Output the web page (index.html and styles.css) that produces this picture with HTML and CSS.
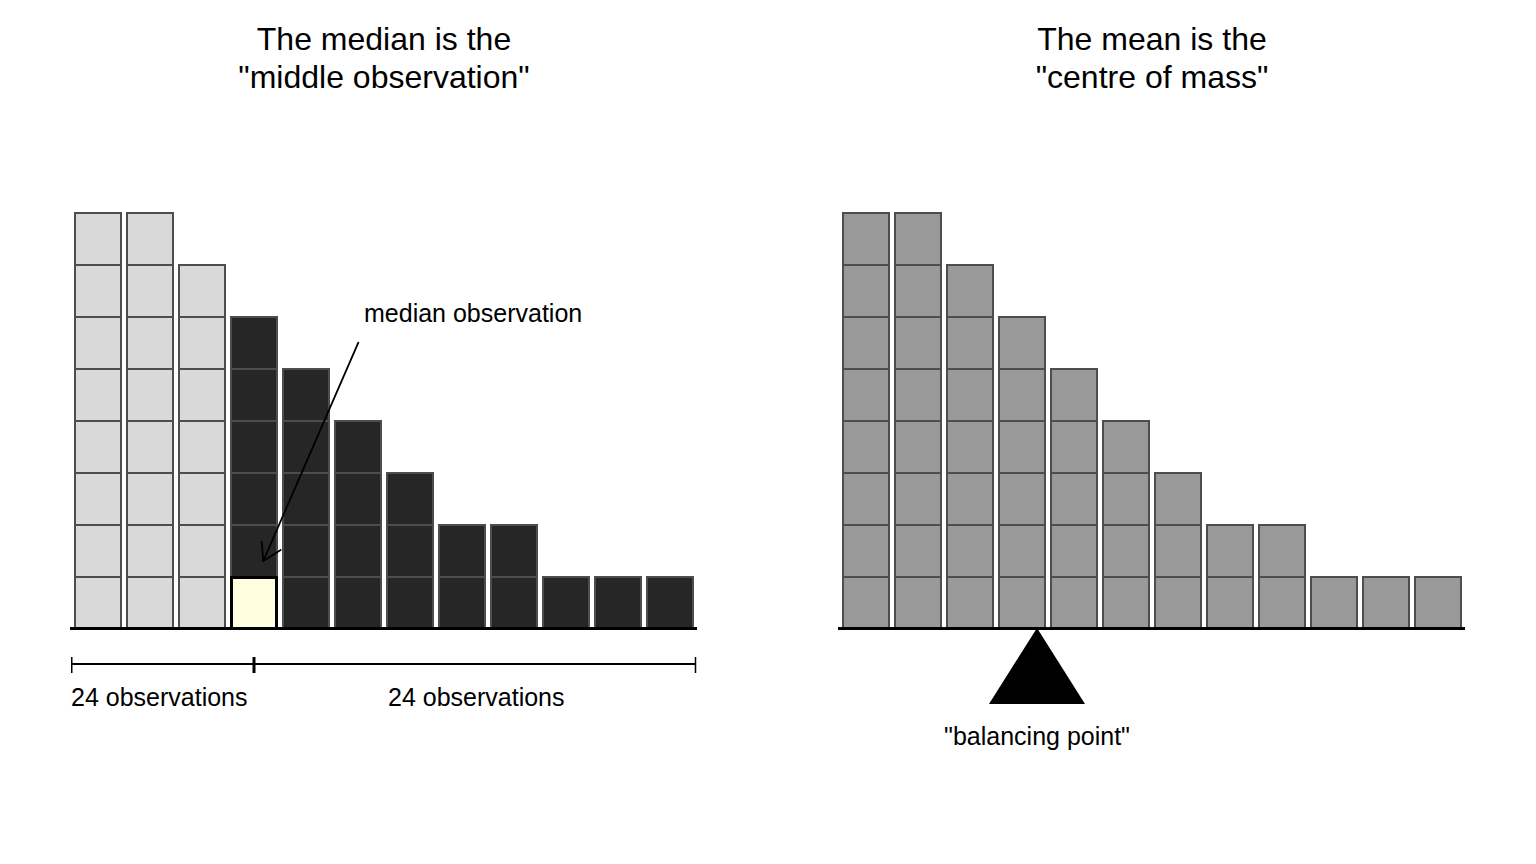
FILE: index.html
```html
<!DOCTYPE html>
<html lang="en">
<head>
<meta charset="utf-8">
<title>Median vs mean</title>
<link rel="stylesheet" href="styles.css">
</head>
<body>
<div class="figure">
  <section class="panel">
    <h2 class="title">The median is the<br>"middle observation"</h2>
    <div class="plot">
      <div class="bars">
        <div class="col"><div class="cell light"></div><div class="cell light"></div><div class="cell light"></div><div class="cell light"></div><div class="cell light"></div><div class="cell light"></div><div class="cell light"></div><div class="cell light"></div></div>
        <div class="col"><div class="cell light"></div><div class="cell light"></div><div class="cell light"></div><div class="cell light"></div><div class="cell light"></div><div class="cell light"></div><div class="cell light"></div><div class="cell light"></div></div>
        <div class="col"><div class="cell light"></div><div class="cell light"></div><div class="cell light"></div><div class="cell light"></div><div class="cell light"></div><div class="cell light"></div><div class="cell light"></div></div>
        <div class="col"><div class="cell dark"></div><div class="cell dark"></div><div class="cell dark"></div><div class="cell dark"></div><div class="cell dark"></div><div class="cell median"></div></div>
        <div class="col"><div class="cell dark"></div><div class="cell dark"></div><div class="cell dark"></div><div class="cell dark"></div><div class="cell dark"></div></div>
        <div class="col"><div class="cell dark"></div><div class="cell dark"></div><div class="cell dark"></div><div class="cell dark"></div></div>
        <div class="col"><div class="cell dark"></div><div class="cell dark"></div><div class="cell dark"></div></div>
        <div class="col"><div class="cell dark"></div><div class="cell dark"></div></div>
        <div class="col"><div class="cell dark"></div><div class="cell dark"></div></div>
        <div class="col"><div class="cell dark"></div></div>
        <div class="col"><div class="cell dark"></div></div>
        <div class="col"><div class="cell dark"></div></div>
      </div>
      <div class="axis"></div>
      <svg class="bracket" width="628" height="18" viewBox="0 0 628 18">
        <line x1="1.75" y1="8" x2="625.5" y2="8" stroke="#000" stroke-width="2"/>
        <line x1="1.75" y1="1" x2="1.75" y2="17" stroke="#000" stroke-width="1.5"/>
        <line x1="184" y1="1" x2="184" y2="17" stroke="#000" stroke-width="3"/>
        <line x1="625.5" y1="1" x2="625.5" y2="17" stroke="#000" stroke-width="1.5"/>
      </svg>
      <div class="counts">
        <span class="count count-a">24 observations</span>
        <span class="count">24 observations</span>
      </div>
    </div>
    <div class="median-note">median observation</div>
    <svg class="arrow" width="120" height="240" viewBox="0 0 120 240">
      <g stroke="#000" stroke-width="1.8" fill="none" stroke-linecap="round">
        <line x1="108.3" y1="12.7" x2="13.3" y2="231"/>
        <polyline points="11.7,211.7 13.3,231 30.7,220"/>
      </g>
    </svg>
  </section>

  <section class="panel">
    <h2 class="title">The mean is the<br>"centre of mass"</h2>
    <div class="plot">
      <div class="bars">
        <div class="col"><div class="cell mid"></div><div class="cell mid"></div><div class="cell mid"></div><div class="cell mid"></div><div class="cell mid"></div><div class="cell mid"></div><div class="cell mid"></div><div class="cell mid"></div></div>
        <div class="col"><div class="cell mid"></div><div class="cell mid"></div><div class="cell mid"></div><div class="cell mid"></div><div class="cell mid"></div><div class="cell mid"></div><div class="cell mid"></div><div class="cell mid"></div></div>
        <div class="col"><div class="cell mid"></div><div class="cell mid"></div><div class="cell mid"></div><div class="cell mid"></div><div class="cell mid"></div><div class="cell mid"></div><div class="cell mid"></div></div>
        <div class="col"><div class="cell mid"></div><div class="cell mid"></div><div class="cell mid"></div><div class="cell mid"></div><div class="cell mid"></div><div class="cell mid"></div></div>
        <div class="col"><div class="cell mid"></div><div class="cell mid"></div><div class="cell mid"></div><div class="cell mid"></div><div class="cell mid"></div></div>
        <div class="col"><div class="cell mid"></div><div class="cell mid"></div><div class="cell mid"></div><div class="cell mid"></div></div>
        <div class="col"><div class="cell mid"></div><div class="cell mid"></div><div class="cell mid"></div></div>
        <div class="col"><div class="cell mid"></div><div class="cell mid"></div></div>
        <div class="col"><div class="cell mid"></div><div class="cell mid"></div></div>
        <div class="col"><div class="cell mid"></div></div>
        <div class="col"><div class="cell mid"></div></div>
        <div class="col"><div class="cell mid"></div></div>
      </div>
      <div class="axis"></div>
      <div class="fulcrum">
        <div class="triangle"></div>
        <div class="balance-label">"balancing point"</div>
      </div>
    </div>
  </section>
</div>
</body>
</html>
```

FILE: styles.css
```css
html, body {
  margin: 0;
  padding: 0;
  background: #ffffff;
}

body {
  font-family: "Liberation Sans", Arial, sans-serif;
  color: #000000;
}

.figure {
  display: flex;
  width: 1536px;
  height: 864px;
  overflow: hidden;
}

.panel {
  position: relative;
  width: 768px;
  flex: 0 0 768px;
}

.title {
  margin: 0;
  padding-top: 20px;
  font-size: 32px;
  line-height: 38px;
  font-weight: normal;
  text-align: center;
}

.plot {
  margin-top: 116px;
  padding-left: 70px;
}

.bars {
  display: flex;
  align-items: flex-end;
  gap: 4px;
  margin-left: 4px;
  height: 418px;
}

.col {
  display: flex;
  flex-direction: column;
  width: 48px;
}

.cell {
  box-sizing: border-box;
  height: 54px;
  border: 2px solid #4d4d4d;
}

.cell + .cell {
  margin-top: -2px;
}

.light {
  background: #d9d9d9;
}

.dark {
  background: #262626;
}

.mid {
  background: #999999;
}

.median {
  background: #ffffe0;
  border: 3px solid #000000;
}

.axis {
  position: relative;
  width: 627px;
  height: 3px;
  margin-top: -3px;
  background: #000000;
}

.bracket {
  display: block;
  margin-top: 26px;
}

.counts {
  display: flex;
  margin-top: 8px;
  font-size: 25px;
  line-height: 30px;
}

.count {
  white-space: nowrap;
}

.count-a {
  box-sizing: border-box;
  width: 318px;
  padding-left: 1px;
}

.median-note {
  position: absolute;
  left: 364px;
  top: 298px;
  font-size: 25px;
  line-height: 30px;
  white-space: nowrap;
}

.arrow {
  position: absolute;
  left: 250px;
  top: 330px;
  pointer-events: none;
}

.fulcrum {
  display: flex;
  flex-direction: column;
  align-items: center;
  width: 96px;
  margin-left: 151px;
}

.triangle {
  width: 0;
  height: 0;
  margin-top: -2px;
  border-left: 48px solid transparent;
  border-right: 48px solid transparent;
  border-bottom: 76px solid #000000;
}

.balance-label {
  margin-top: 17px;
  font-size: 25px;
  line-height: 30px;
  white-space: nowrap;
}
```
